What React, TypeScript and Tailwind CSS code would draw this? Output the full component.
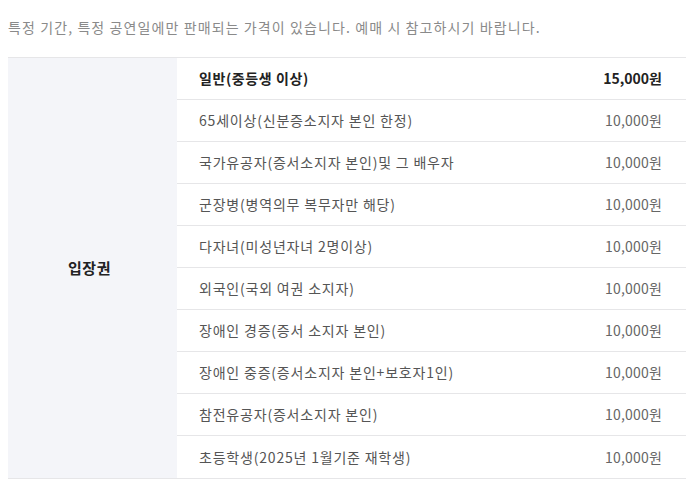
const rows = [
  { name: "일반(중등생 이상)", price: "15,000원", bold: true },
  { name: "65세이상(신분증소지자 본인 한정)", price: "10,000원" },
  { name: "국가유공자(증서소지자 본인)및 그 배우자", price: "10,000원" },
  { name: "군장병(병역의무 복무자만 해당)", price: "10,000원" },
  { name: "다자녀(미성년자녀 2명이상)", price: "10,000원" },
  { name: "외국인(국외 여권 소지자)", price: "10,000원" },
  { name: "장애인 경증(증서 소지자 본인)", price: "10,000원" },
  { name: "장애인 중증(증서소지자 본인+보호자1인)", price: "10,000원" },
  { name: "참전유공자(증서소지자 본인)", price: "10,000원" },
  { name: "초등학생(2025년 1월기준 재학생)", price: "10,000원" },
];

export default function App() {
  return (
    <div
      className="w-[697px] h-[487px] bg-white overflow-hidden"
      style={{ fontFamily: '"Noto Sans CJK KR", "Noto Sans", sans-serif' }}
    >
      <p className="pl-[8px] pt-[17px] text-[14px] leading-[20px] text-[#8a8a8a] tracking-[1.1px]">
        특정 기간, 특정 공연일에만 판매되는 가격이 있습니다. 예매 시 참고하시기 바랍니다.
      </p>
      <div className="mt-[20px] ml-[8px] w-[678px] flex border-t border-b border-[#e6e6e8]">
        <div className="w-[169px] bg-[#f4f5f9] flex items-center justify-center">
          <span className="text-[15px] font-bold text-[#222] tracking-[0.5px] -ml-[6px]">입장권</span>
        </div>
        <div className="flex-1">
          {rows.map((row, i) => (
            <div
              key={row.name}
              className={
                "h-[42px] flex items-center justify-between pl-[22px] pr-[24px] " +
                (i < rows.length - 1 ? "border-b border-[#e6e6e8]" : "")
              }
            >
              <span
                className={
                  row.bold
                    ? "text-[14px] font-bold text-[#222] tracking-[0.6px]"
                    : "text-[14px] text-[#555] tracking-[0.8px]"
                }
              >
                {row.name}
              </span>
              <span
                className={
                  row.bold
                    ? "text-[14px] font-bold text-[#222]"
                    : "text-[14px] text-[#666] tracking-[0.2px]"
                }
              >
                {row.price}
              </span>
            </div>
          ))}
        </div>
      </div>
    </div>
  );
}
